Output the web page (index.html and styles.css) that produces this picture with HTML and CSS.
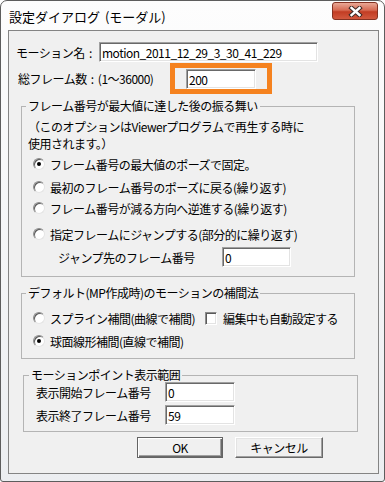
FILE: index.html
```html
<!DOCTYPE html>
<html lang="ja">
<head>
    <meta charset="UTF-8">
    <title>設定ダイアログ (モーダル)</title>
    <link rel="stylesheet" href="styles.css">
</head>
<body>
    <div class="window">
        <div class="titlebar">
            <span class="title">設定ダイアログ (モーダル)</span>
            <button class="close-btn" type="button">
                <svg width="15" height="11" viewBox="0 0 15 11">
                    <path d="M3.5 2 L11.5 9 M11.5 2 L3.5 9" stroke="#3d2a26" stroke-width="4.4" stroke-linecap="square"/>
                    <path d="M3.5 2 L11.5 9 M11.5 2 L3.5 9" stroke="#fff" stroke-width="2.4" stroke-linecap="square"/>
                </svg>
            </button>
        </div>
        <div class="client">
            <div class="field-row name-row">
                <label class="name-label">モーション名 :</label>
                <input class="edit name-edit" type="text" value="motion_2011_12_29_3_30_41_229">
            </div>
            <div class="field-row frames-row">
                <label class="frames-label">総フレーム数 : (1〜36000)</label>
                <span class="highlight"><input class="edit frames-edit" type="text" value="200"></span>
            </div>

            <!-- 最大値に達した後 -->
            <fieldset class="group loop-group">
                <legend>フレーム番号が最大値に達した後の振る舞い</legend>
                <p class="note"><span class="note-line">（このオプションはViewerプログラムで再生する時に</span><span class="note-line">使用されます。）</span></p>
                <label class="radio r1"><span class="radio-box checked"></span>フレーム番号の最大値のポーズで固定。</label>
                <label class="radio r2"><span class="radio-box"></span>最初のフレーム番号のポーズに戻る(繰り返す)</label>
                <label class="radio r3"><span class="radio-box"></span>フレーム番号が減る方向へ逆進する(繰り返す)</label>
                <label class="radio r4"><span class="radio-box"></span>指定フレームにジャンプする(部分的に繰り返す)</label>
                <div class="field-row jump-row">
                    <span class="jump-label">ジャンプ先のフレーム番号</span>
                    <input class="edit jump-edit" type="text" value="0">
                </div>
            </fieldset>

            <!-- 補間法 -->
            <fieldset class="group interp-group">
                <legend>デフォルト(MP作成時)のモーションの補間法</legend>
                <div class="field-row ir1">
                    <label class="radio spline"><span class="radio-box"></span>スプライン補間(曲線で補間)</label>
                    <label class="check"><span class="check-box"></span>編集中も自動設定する</label>
                </div>
                <label class="radio ir2"><span class="radio-box checked"></span>球面線形補間(直線で補間)</label>
            </fieldset>

            <!-- 表示範囲 -->
            <fieldset class="group range-group">
                <legend>モーションポイント表示範囲</legend>
                <div class="field-row range-row">
                    <span class="range-label">表示開始フレーム番号</span>
                    <input class="edit range-edit" type="text" value="0">
                </div>
                <div class="field-row range-row second">
                    <span class="range-label">表示終了フレーム番号</span>
                    <input class="edit range-edit" type="text" value="59">
                </div>
            </fieldset>

            <div class="buttons">
                <button class="btn default" type="button">OK</button>
                <button class="btn cancel" type="button">キャンセル</button>
            </div>
        </div>
    </div>
</body>
</html>
```
FILE: styles.css
```css
body {
    margin: 0;
    background: #fff;
    font-family: "Noto Sans CJK JP", sans-serif;
    font-size: 12px;
    letter-spacing: -0.5px;
    word-spacing: 2px;
    color: #000;
}

/* ウィンドウ枠 */
.window {
    width: 385px;
    height: 482px;
    box-sizing: border-box;
    border: 1px solid #5d5d5d;
    border-radius: 7px 7px 3px 3px;
    background: linear-gradient(#fdfdfd, #eceef1);
    padding: 0 5px 7px 7px;
    display: flex;
    flex-direction: column;
}
.titlebar {
    height: 29px;
    display: flex;
    justify-content: space-between;
    align-items: flex-start;
}
.title {
    font-size: 13px;
    line-height: 15px;
    margin: 8px 0 0 1px;
    letter-spacing: 0;
}
.close-btn {
    width: 46px;
    height: 18px;
    margin: 1px 1px 0 0;
    padding: 0;
    border: 1px solid #833222;
    border-radius: 3px;
    background: linear-gradient(#e9a896, #d66a52 45%, #c23d24 55%, #d2593f);
    display: flex;
    align-items: center;
    justify-content: center;
}
.client {
    flex: 1;
    border: 1px solid #848484;
    background: #f0f0f0;
}

/* 行 */
.field-row {
    display: flex;
    align-items: center;
}
.name-row {
    margin-top: 11px;
    padding-left: 7px;
    height: 20px;
}
.name-label { width: 83px; }
.frames-row {
    margin-top: 1px;
    padding-left: 9px;
}
.frames-label { width: 152px; }
.highlight {
    display: flex;
    border: 5px solid #f5821f;
    padding: 1px 11px 0 11px;
}

/* エディット */
.edit {
    box-sizing: border-box;
    height: 20px;
    margin: 0;
    padding: 0 0 0 2px;
    font: inherit;
    letter-spacing: inherit;
    color: #000;
    background: #fff;
    border: 1px solid;
    border-color: #a0a0a0 #fff #fff #a0a0a0;
    box-shadow: inset 1px 1px 0 #696969, inset -1px -1px 0 #e3e3e3;
    outline: none;
}
.name-edit { width: 219px; }
.frames-edit { width: 70px; }
.jump-edit { width: 69px; }
.range-edit { width: 70px; }

/* グループボックス */
.group {
    margin: 0 0 0 12px;
    width: 334px;
    min-width: 0;
    box-sizing: border-box;
    border: 1px solid #b4b4b4;
    padding: 0 0 0 4px;
}
.group legend {
    padding: 0 2px;
    line-height: 14px;
}
.loop-group {
    margin-top: 5px;
    padding-bottom: 9px;
}
.note {
    margin: 5px 0 0 2px;
    line-height: 17px;
}
.note-line { display: block; }

/* ラジオ・チェック */
.radio, .check {
    display: flex;
    align-items: center;
    height: 20px;
}
.radio { padding-left: 7px; }
.radio-box {
    width: 12px;
    height: 12px;
    box-sizing: border-box;
    border-radius: 50%;
    border: 1px solid;
    border-color: #8c8c8c #e4e4e4 #e4e4e4 #8c8c8c;
    box-shadow: inset 1px 1px 0 #5a5a5a;
    background: #fff;
    margin-right: 5px;
    position: relative;
}
.radio-box.checked::after {
    content: '';
    position: absolute;
    width: 4px;
    height: 4px;
    border-radius: 50%;
    background: #000;
    top: 3px;
    left: 3px;
}
.check-box {
    width: 12px;
    height: 13px;
    box-sizing: border-box;
    border: 1px solid;
    border-color: #8c8c8c #fff #fff #8c8c8c;
    box-shadow: inset 1px 1px 0 #5a5a5a, inset -1px -1px 0 #e3e3e3;
    background: #fff;
    margin-right: 6px;
}
.r1 { margin-top: 2px; }
.r2 { margin-top: 3px; }
.r3 { margin-top: 1px; }
.r4 { margin-top: 6px; }
.jump-row {
    margin-top: 3px;
    padding-left: 32px;
}
.jump-label { width: 164px; }

.interp-group {
    margin-top: 9px;
    padding-bottom: 7px;
}
.ir1 { margin-top: 8px; }
.ir2 { margin-top: 3px; }
.spline {
    width: 179px;
    box-sizing: border-box;
}

.range-group {
    margin: 9px 0 0 14px;
    width: 335px;
    padding: 0 0 6px 5px;
}
.range-row { height: 20px; }
.range-row.second { margin-top: 3px; }
.range-label {
    width: 136px;
    padding-left: 7px;
    box-sizing: border-box;
}

/* ボタン */
.buttons {
    display: flex;
    gap: 12px;
    margin: 5px 0 0 128px;
}
.btn {
    width: 86px;
    height: 21px;
    padding: 0;
    font: inherit;
    letter-spacing: inherit;
    color: #000;
    background: #f0f0f0;
    border: 1px solid;
    border-color: #fff #696969 #696969 #fff;
    box-shadow: inset -1px -1px 0 #a0a0a0, inset 1px 1px 0 #e3e3e3;
}
.btn.default {
    border-color: #646464;
    box-shadow: inset 1px 1px 0 #fff, inset -1px -1px 0 #696969, inset -2px -2px 0 #a0a0a0;
}
.btn.cancel { width: 88px; }
```
